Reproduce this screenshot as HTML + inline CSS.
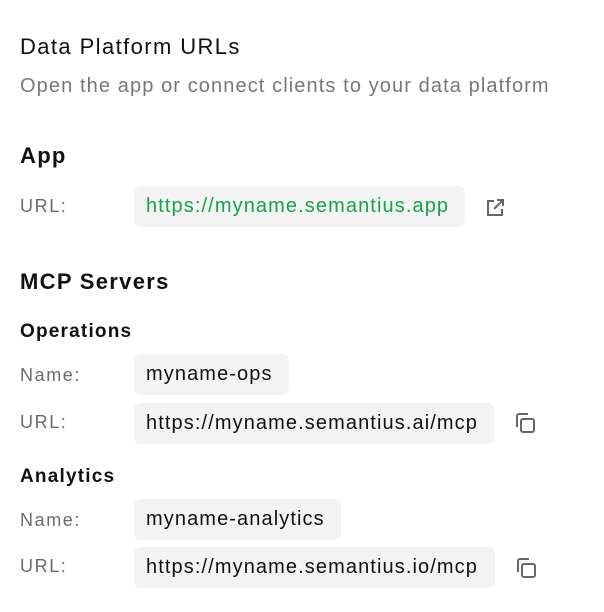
<!DOCTYPE html>
<html><head><style>
body{margin:0;background:#fff;font-family:"Liberation Sans",sans-serif;color:#111;}
.a{position:absolute;white-space:nowrap}
.t{font-size:22px;font-weight:500;letter-spacing:1.4px}
.h{font-size:22px;font-weight:600;letter-spacing:1.3px}
.s{font-size:19px;font-weight:700;letter-spacing:1.2px}
.l{font-size:18px;color:#6b6b6b;left:20px;letter-spacing:1.6px}
.b{background:#f3f3f3;border-radius:7px;left:134px;height:41px;line-height:41px;padding:0 12px;font-size:20px;letter-spacing:1.1px;box-sizing:border-box}
</style></head><body>
<div class="a t" style="left:20px;top:34px">Data Platform URLs</div>
<div class="a" style="left:20px;top:75px;font-size:20px;letter-spacing:1.1px;color:#777">Open the app or connect clients to your data platform</div>
<div class="a h" style="left:20px;top:143px">App</div>
<div class="a l" style="top:196px">URL:</div>
<div class="a b" style="top:186px;width:331px;color:#16a34a">https://myname.semantius.app</div>
<svg class="a" style="left:483px;top:196px" width="24" height="24" viewBox="0 0 24 24" fill="none" stroke="#666" stroke-width="2"><path d="M11 5H5v14h14v-6M14 4h6v6M20 4l-9 9"/></svg>
<div class="a h" style="left:20px;top:269px">MCP Servers</div>
<div class="a s" style="left:20px;top:321px">Operations</div>
<div class="a l" style="top:365px">Name:</div>
<div class="a b" style="top:354px;width:155px">myname-ops</div>
<div class="a l" style="top:412px">URL:</div>
<div class="a b" style="top:403px;width:360px">https://myname.semantius.ai/mcp</div>
<svg class="a" style="left:513px;top:411px" width="24" height="24" viewBox="0 0 24 24" fill="none" stroke="#666" stroke-width="2"><rect x="8" y="8" width="13" height="13" rx="2"/><path d="M4 16V5a2 2 0 0 1 2-2h9"/></svg>
<div class="a s" style="left:20px;top:466px">Analytics</div>
<div class="a l" style="top:510px">Name:</div>
<div class="a b" style="top:499px;width:207px">myname-analytics</div>
<div class="a l" style="top:556px">URL:</div>
<div class="a b" style="top:547px;width:361px">https://myname.semantius.io/mcp</div>
<svg class="a" style="left:514px;top:556px" width="24" height="24" viewBox="0 0 24 24" fill="none" stroke="#666" stroke-width="2"><rect x="8" y="8" width="13" height="13" rx="2"/><path d="M4 16V5a2 2 0 0 1 2-2h9"/></svg>
</body></html>
